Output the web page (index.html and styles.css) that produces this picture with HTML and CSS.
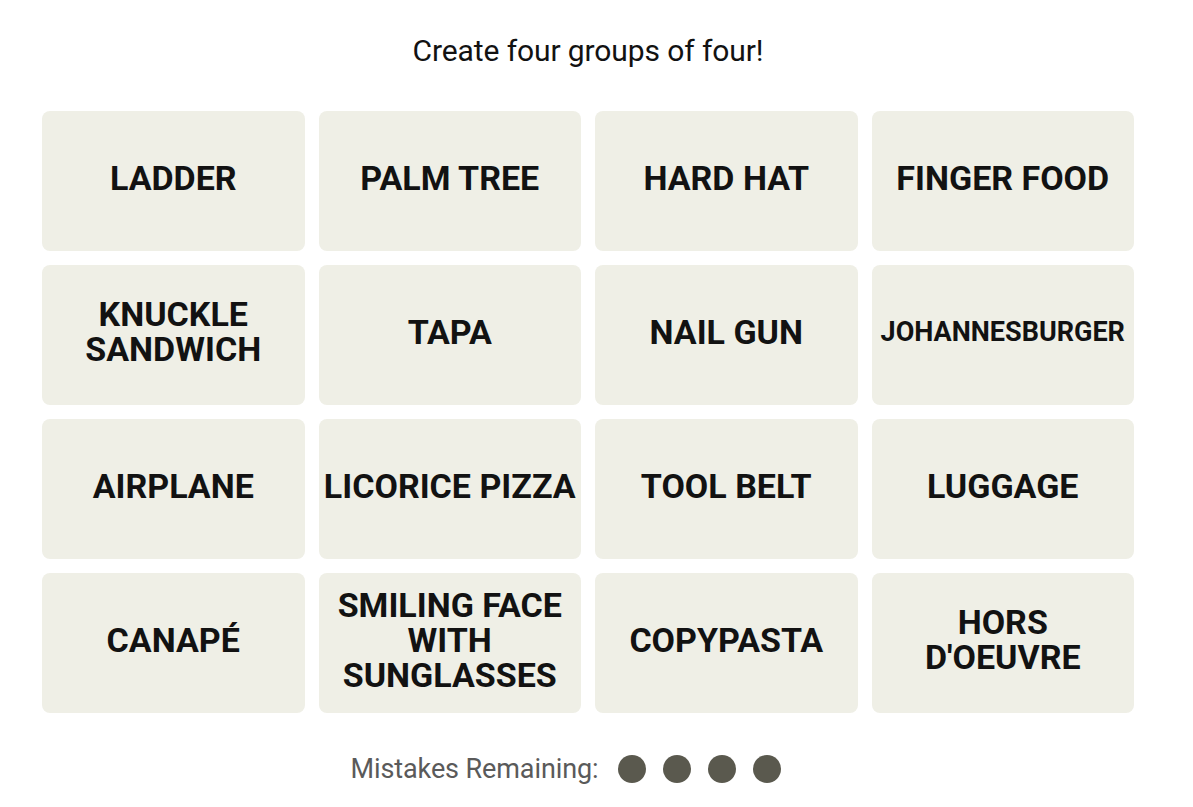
FILE: index.html
```html
<!DOCTYPE html>
<html lang="en">
<head>
<meta charset="utf-8">
<title>Connections</title>
<link rel="stylesheet" href="styles.css">
</head>
<body>
<main class="game">
  <h1 class="prompt">Create four groups of four!</h1>
  <section class="board">
    <div class="tile"><span>LADDER</span></div>
    <div class="tile"><span>PALM TREE</span></div>
    <div class="tile"><span>HARD HAT</span></div>
    <div class="tile"><span>FINGER FOOD</span></div>
    <div class="tile"><span>KNUCKLE SANDWICH</span></div>
    <div class="tile"><span>TAPA</span></div>
    <div class="tile"><span>NAIL GUN</span></div>
    <div class="tile tile-small"><span>JOHANNESBURGER</span></div>
    <div class="tile"><span>AIRPLANE</span></div>
    <div class="tile"><span>LICORICE PIZZA</span></div>
    <div class="tile"><span>TOOL BELT</span></div>
    <div class="tile"><span>LUGGAGE</span></div>
    <div class="tile"><span>CANAPÉ</span></div>
    <div class="tile"><span>SMILING FACE WITH SUNGLASSES</span></div>
    <div class="tile"><span>COPYPASTA</span></div>
    <div class="tile"><span>HORS<br>D'OEUVRE</span></div>
  </section>
  <div class="mistakes">
    <span class="mistakes-label">Mistakes Remaining:</span>
    <span class="dots">
      <span class="dot"></span>
      <span class="dot"></span>
      <span class="dot"></span>
      <span class="dot"></span>
    </span>
  </div>
</main>
</body>
</html>
```

FILE: styles.css
```css
* { box-sizing: border-box; }

html, body {
  margin: 0;
  padding: 0;
  background: #ffffff;
}

body {
  font-family: Roboto, "Liberation Sans", sans-serif;
  color: #121212;
}

.game {
  width: 1176px;
  padding: 30px 42px 0;
}

.prompt {
  margin: 0;
  height: 81px;
  font-size: 30px;
  line-height: 42px;
  font-weight: 400;
  text-align: center;
  letter-spacing: -0.1px;
  color: #121212;
}

.board {
  display: grid;
  grid-template-columns: repeat(4, 1fr);
  grid-auto-rows: 140px;
  gap: 14px;
  width: 1092px;
}

.tile {
  background: #efefe6;
  border-radius: 8px;
  display: flex;
  align-items: center;
  justify-content: center;
  text-align: center;
  padding: 0 4px 6px;
  font-weight: 700;
  font-size: 34px;
  line-height: 35px;
  color: #121212;
  text-transform: uppercase;
}

.tile-small {
  font-size: 27px;
}

.mistakes {
  display: flex;
  justify-content: center;
  align-items: center;
  margin-top: 38px;
  padding-right: 45px;
  height: 36px;
  gap: 19px;
}

.mistakes-label {
  font-size: 27px;
  color: #5a5a5a;
  letter-spacing: -0.1px;
}

.dots {
  display: flex;
  gap: 17px;
}

.dot {
  width: 28px;
  height: 28px;
  border-radius: 50%;
  background: #5a594e;
}
```
